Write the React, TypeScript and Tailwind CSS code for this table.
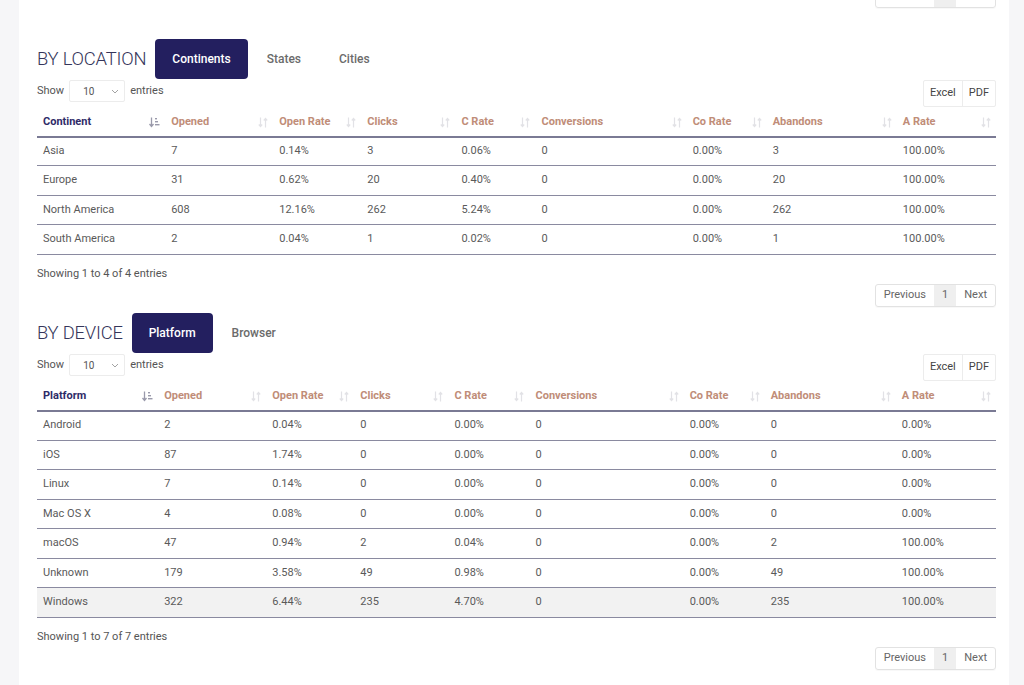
import * as React from "react"

type Row = string[]

interface Section {
  title: string
  tabs: string[]
  firstCol: string
  widths: string[]
  rowClass: string
  rows: Row[]
  highlight?: number
}

const headers = ["Opened", "Open Rate", "Clicks", "C Rate", "Conversions", "Co Rate", "Abandons", "A Rate"]

const sections: Section[] = [
  {
    title: "BY LOCATION",
    tabs: ["Continents", "States", "Cities"],
    firstCol: "Continent",
    widths: ["w-[128px]", "w-[108px]", "w-[88px]", "w-[94px]", "w-[80px]", "w-[151px]", "w-[80px]", "w-[130px]", "w-[99px]"],
    rowClass: "h-[29.4px]",
    rows: [
      ["Asia", "7", "0.14%", "3", "0.06%", "0", "0.00%", "3", "100.00%"],
      ["Europe", "31", "0.62%", "20", "0.40%", "0", "0.00%", "20", "100.00%"],
      ["North America", "608", "12.16%", "262", "5.24%", "0", "0.00%", "262", "100.00%"],
      ["South America", "2", "0.04%", "1", "0.02%", "0", "0.00%", "1", "100.00%"],
    ],
  },
  {
    title: "BY DEVICE",
    tabs: ["Platform", "Browser"],
    firstCol: "Platform",
    widths: ["w-[121px]", "w-[108px]", "w-[88px]", "w-[94px]", "w-[81px]", "w-[154px]", "w-[81px]", "w-[131px]", "w-[100px]"],
    rowClass: "h-[29.5px]",
    rows: [
      ["Android", "2", "0.04%", "0", "0.00%", "0", "0.00%", "0", "0.00%"],
      ["iOS", "87", "1.74%", "0", "0.00%", "0", "0.00%", "0", "0.00%"],
      ["Linux", "7", "0.14%", "0", "0.00%", "0", "0.00%", "0", "0.00%"],
      ["Mac OS X", "4", "0.08%", "0", "0.00%", "0", "0.00%", "0", "0.00%"],
      ["macOS", "47", "0.94%", "2", "0.04%", "0", "0.00%", "2", "100.00%"],
      ["Unknown", "179", "3.58%", "49", "0.98%", "0", "0.00%", "49", "100.00%"],
      ["Windows", "322", "6.44%", "235", "4.70%", "0", "0.00%", "235", "100.00%"],
    ],
    highlight: 6,
  },
]

function SortIcon({ active }: { active?: boolean }) {
  if (active) {
    return (
      <svg width="11" height="11" viewBox="0 0 11 11" className="text-[#9a9aab]">
        <path d="M2.5 0.5v8.5M0.5 7l2 2.5 2-2.5" stroke="currentColor" strokeWidth="1.3" fill="none" />
        <rect x="6" y="1" width="2" height="1.4" fill="currentColor" />
        <rect x="6" y="4" width="3" height="1.4" fill="currentColor" />
        <rect x="6" y="7" width="4.5" height="1.4" fill="currentColor" />
      </svg>
    )
  }
  return (
    <svg width="10" height="11" viewBox="0 0 10 11" className="text-[#e2e2e6]">
      <path d="M2.5 0.5v9M0.8 7.5l1.7 2 1.7-2" stroke="currentColor" strokeWidth="1.2" fill="none" />
      <path d="M7.5 10.5v-9M5.8 3.5l1.7-2 1.7 2" stroke="currentColor" strokeWidth="1.2" fill="none" />
    </svg>
  )
}

function Pagination() {
  return (
    <div className="flex justify-end">
      <div className="flex h-[23px] items-stretch rounded-[3px] border border-[#e2e2e2] text-[11px] text-[#666] shadow-[0_1px_1px_rgba(0,0,0,0.03)]">
        <span className="flex items-center px-[8px]">Previous</span>
        <span className="flex items-center bg-[#efefef] px-[8px]">1</span>
        <span className="flex items-center px-[8px]">Next</span>
      </div>
    </div>
  )
}

function DataSection({ section }: { section: Section }) {
  return (
    <div>
      <div className="flex items-center">
        <h2 className="mr-[9px] text-[18.4px] font-light tracking-[-0.2px] text-[#35355a]">{section.title}</h2>
        {section.tabs.map((tab, i) => (
          <button
            key={tab}
            className={
              i === 0
                ? "h-[40px] rounded-[4px] bg-[#231f5f] px-[17px] text-[12px] font-medium text-white"
                : "h-[40px] px-[19px] text-[12px] font-medium text-[#6b6b6b]"
            }
          >
            {tab}
          </button>
        ))}
      </div>

      <div className="mt-px flex items-start justify-between">
        <div className="flex items-center gap-[5px] text-[11px] text-[#555]">
          <span>Show</span>
          <div className="flex h-[22px] w-[56px] items-center justify-between rounded-[2px] border border-[#ececec] pl-[13px] pr-[5px] text-[10px] text-[#555]">
            <span>10</span>
            <svg width="8" height="5" viewBox="0 0 8 5">
              <path d="M1 1l3 3 3-3" stroke="#999" strokeWidth="0.9" fill="none" />
            </svg>
          </div>
          <span>entries</span>
        </div>
        <div className="flex h-[27px] items-stretch rounded-[2px] border border-[#ececec] text-[11px] text-[#444]">
          <span className="flex items-center border-r border-[#ececec] px-[6px]">Excel</span>
          <span className="flex items-center px-[6px]">PDF</span>
        </div>
      </div>

      <table className="w-full table-fixed border-collapse text-[11px]">
        <thead>
          <tr className="h-[29.5px] border-b-[2px] border-[#7a7a94]">
            {[section.firstCol, ...headers].map((h, i) => (
              <th key={h} className={section.widths[i] + " p-0 pt-[2px] text-left font-bold"}>
                <div className="flex items-center justify-between pl-[6px] pr-[5px]">
                  <span className={i === 0 ? "text-[#2f2b68]" : "text-[#c08d78]"}>{h}</span>
                  <SortIcon active={i === 0} />
                </div>
              </th>
            ))}
          </tr>
        </thead>
        <tbody>
          {section.rows.map((row, r) => (
            <tr
              key={row[0]}
              className={
                section.rowClass +
                " border-b-[1.5px] border-[#8a8aa0] text-[#5a5a5a]" +
                (section.highlight === r ? " bg-[#f2f2f2]" : "")
              }
            >
              {row.map((cell, c) => (
                <td key={c} className="p-0 pl-[6px]">
                  {cell}
                </td>
              ))}
            </tr>
          ))}
        </tbody>
      </table>

      <div className="mt-[11px] text-[11px] text-[#555]">
        Showing 1 to {section.rows.length} of {section.rows.length} entries
      </div>
      <div className="mt-[2px]">
        <Pagination />
      </div>
    </div>
  )
}

export default function App() {
  return (
    <div
      className="h-[685px] overflow-hidden bg-[#f6f6f8]"
      style={{ fontFamily: "Roboto, 'Liberation Sans', sans-serif" }}
    >
      <div className="ml-[19px] mr-[15px] flow-root h-full bg-white px-[18px] pr-[13px]">
        <div className="-mt-[15px]">
          <Pagination />
        </div>
        <div className="mt-[31px]">
          <DataSection section={sections[0]} />
        </div>
        <div className="mt-[6px]">
          <DataSection section={sections[1]} />
        </div>
      </div>
    </div>
  )
}
